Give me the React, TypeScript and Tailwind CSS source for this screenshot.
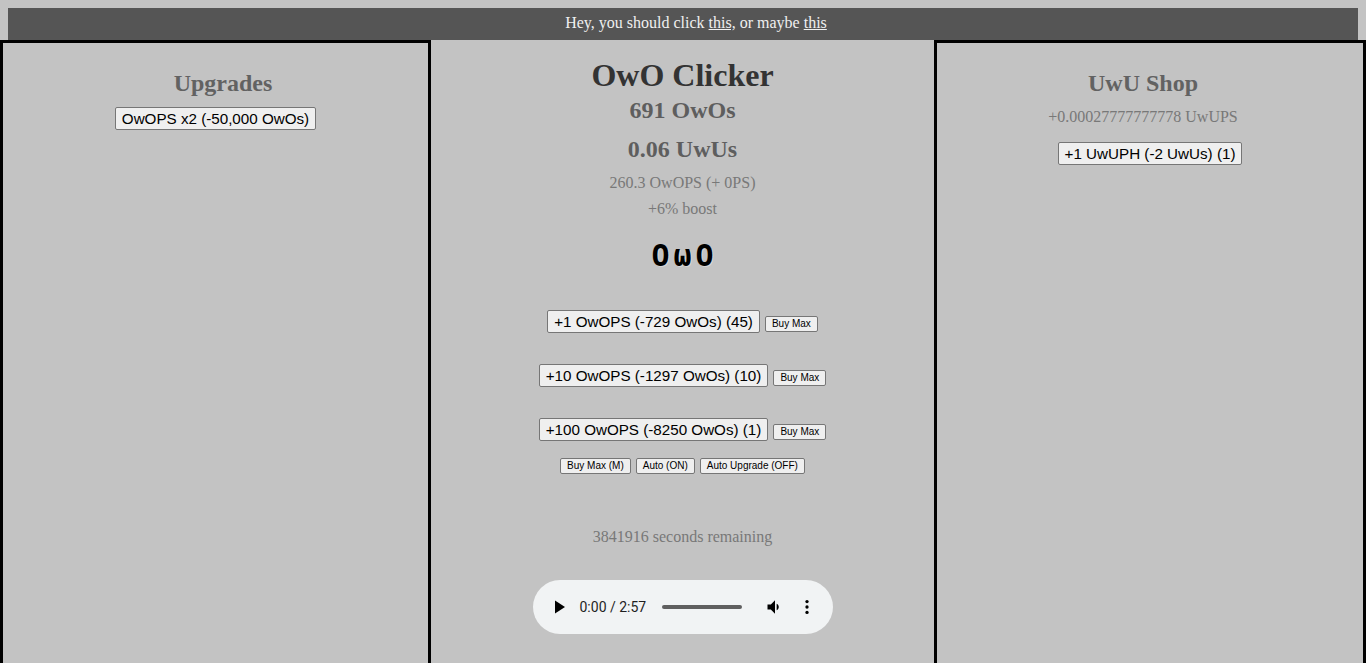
import React from "react";

const serif = { fontFamily: '"Liberation Serif", "Times New Roman", serif' };

function Btn({ children, small }: { children: React.ReactNode; small?: boolean }) {
  return (
    <button
      className={
        small
          ? "bg-[#efefef] border border-[#767676] rounded-[2px] px-[6px] py-[1px] text-[10px] leading-[12px] text-black"
          : "bg-[#efefef] border border-[#767676] rounded-[2px] px-[6px] py-[1px] text-[15.2px] leading-[19px] text-black"
      }
      style={{ fontFamily: '"Liberation Sans", Arial, sans-serif' }}
    >
      {children}
    </button>
  );
}

export default function App() {
  return (
    <div className="bg-[#c3c3c3] min-h-[663px] h-[663px] overflow-hidden pt-[8px]" style={serif}>
      <div className="mx-[8px] h-[32px] bg-[#555555] flex items-center justify-center text-[16px] text-[#f0f0f0] pl-[26px] pb-[2px]">
        <span>
          Hey, you should click <a className="underline">this,</a> or maybe <a className="underline">this</a>
        </span>
      </div>
      <div className="flex h-[623px]">
        {/* Left */}
        <div className="w-[431px] shrink-0 border-t-[3px] border-x-[3px] border-black flex flex-col items-center">
          <h2 className="mt-[26px] text-[24px] leading-[28px] font-bold text-[#626262] pl-[15px]">Upgrades</h2>
          <div className="mt-[10px]">
            <Btn>OwOPS x2 (-50,000 OwOs)</Btn>
          </div>
        </div>
        {/* Center */}
        <div className="w-[503px] shrink-0 flex flex-col items-center">
          <h1 className="mt-[17px] text-[32px] leading-[36px] font-bold text-[#333333]">OwO Clicker</h1>
          <h2 className="mt-[3px] text-[24px] leading-[28px] font-bold text-[#5e5e5e]">691 OwOs</h2>
          <h2 className="mt-[11px] text-[24px] leading-[28px] font-bold text-[#5e5e5e]">0.06 UwUs</h2>
          <p className="mt-[11px] text-[16px] leading-[18px] text-[#787878]">260.3 OwOPS (+ 0PS)</p>
          <p className="mt-[8px] text-[16px] leading-[18px] text-[#787878]">+6% boost</p>
          <div
            className="mt-[23px] h-[30px] flex items-center text-[30px] leading-[30px] font-bold text-black tracking-[4px] pl-[4px]"
            style={{ fontFamily: '"DejaVu Sans Mono", monospace', textShadow: "1px 1px 0 rgba(255,255,255,0.35)" }}
          >
            OωO
          </div>
          <div className="mt-[39px] flex items-baseline gap-[5px]">
            <Btn>+1 OwOPS (-729 OwOs) (45)</Btn>
            <Btn small>Buy Max</Btn>
          </div>
          <div className="mt-[31px] flex items-baseline gap-[5px]">
            <Btn>+10 OwOPS (-1297 OwOs) (10)</Btn>
            <Btn small>Buy Max</Btn>
          </div>
          <div className="mt-[31px] flex items-baseline gap-[5px]">
            <Btn>+100 OwOPS (-8250 OwOs) (1)</Btn>
            <Btn small>Buy Max</Btn>
          </div>
          <div className="mt-[17px] flex items-baseline gap-[5px]">
            <Btn small>Buy Max (M)</Btn>
            <Btn small>Auto (ON)</Btn>
            <Btn small>Auto Upgrade (OFF)</Btn>
          </div>
          <p className="mt-[54px] text-[16px] leading-[18px] text-[#787878]">3841916 seconds remaining</p>
          <div
            className="mt-[34px] w-[300px] h-[54px] rounded-full bg-[#f1f3f4] flex items-center pl-[21px] pr-[20px]"
            style={{ fontFamily: 'Roboto, "Liberation Sans", Arial, sans-serif' }}
          >
            <svg width="12" height="14" viewBox="0 0 12 14" className="shrink-0">
              <path d="M1 0.5 L11 7 L1 13.5 Z" fill="#000" />
            </svg>
            <span className="ml-[14px] text-[14px] text-[#1f1f1f] whitespace-nowrap">0:00 / 2:57</span>
            <div className="ml-[16px] w-[80px] h-[4px] rounded-full bg-[#5f5f5f] shrink-0" />
            <svg width="20" height="20" viewBox="0 0 24 24" className="ml-[23px] shrink-0">
              <path
                d="M3 9v6h4l5 5V4L7 9H3zm13.5 3c0-1.77-1.02-3.29-2.5-4.03v8.05c1.48-.73 2.5-2.25 2.5-4.02z"
                fill="#000"
              />
            </svg>
            <svg width="20" height="20" viewBox="0 0 24 24" className="ml-[12px] shrink-0">
              <circle cx="12" cy="5.5" r="2" fill="#000" />
              <circle cx="12" cy="12" r="2" fill="#000" />
              <circle cx="12" cy="18.5" r="2" fill="#000" />
            </svg>
          </div>
        </div>
        {/* Right */}
        <div className="flex-1 border-t-[3px] border-x-[3px] border-black flex flex-col items-center">
          <h2 className="mt-[26px] text-[24px] leading-[28px] font-bold text-[#626262] pr-[14px]">UwU Shop</h2>
          <p className="mt-[11px] text-[16px] leading-[18px] text-[#787878] pr-[14px]">+0.00027777777778 UwUPS</p>
          <div className="mt-[16px]">
            <Btn>+1 UwUPH (-2 UwUs) (1)</Btn>
          </div>
        </div>
      </div>
    </div>
  );
}
